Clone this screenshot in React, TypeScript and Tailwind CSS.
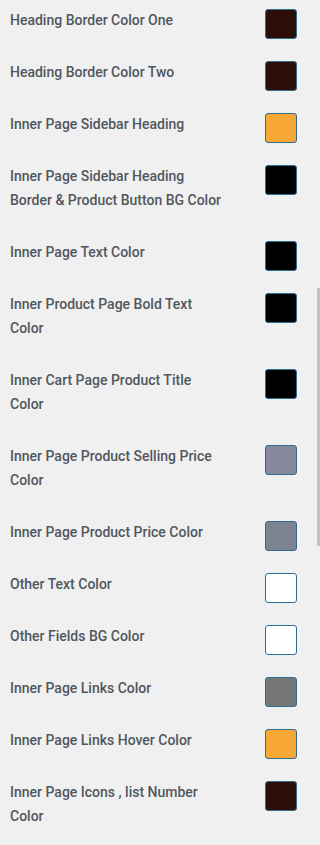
const rows = [
    { label: 'Heading Border Color One', color: 'bg-[#2e0f07]' },
    { label: 'Heading Border Color Two', color: 'bg-[#2e0f07]' },
    { label: 'Inner Page Sidebar Heading', color: 'bg-[#f7a836]' },
    { label: 'Inner Page Sidebar Heading Border & Product Button BG Color', color: 'bg-[#000000]' },
    { label: 'Inner Page Text Color', color: 'bg-[#000000]' },
    { label: 'Inner Product Page Bold Text Color', color: 'bg-[#000000]' },
    { label: 'Inner Cart Page Product Title Color', color: 'bg-[#000000]' },
    { label: 'Inner Page Product Selling Price Color', color: 'bg-[#878a9e]' },
    { label: 'Inner Page Product Price Color', color: 'bg-[#7d8391]' },
    { label: 'Other Text Color', color: 'bg-[#ffffff]' },
    { label: 'Other Fields BG Color', color: 'bg-[#ffffff]' },
    { label: 'Inner Page Links Color', color: 'bg-[#767676]' },
    { label: 'Inner Page Links Hover Color', color: 'bg-[#f7a836]' },
    { label: 'Inner Page Icons , list Number Color', color: 'bg-[#2e0f07]' },
];

export default function App() {
    return (
        <div className="relative min-h-screen bg-[#f0f0f0] overflow-hidden" style={{ fontFamily: 'Roboto, "Liberation Sans", sans-serif' }}>
            <div className="flex flex-col gap-[28px] pt-[8px] pl-[10px] pr-[23px]">
                {rows.map((row) => (
                    <div key={row.label} className="flex items-start justify-between">
                        <span className="w-[212px] text-[14px] leading-[24px] font-medium text-[#50575e]">{row.label}</span>
                        <span className={`mt-[1px] -mb-[7px] h-[30px] w-[32px] rounded-[3px] border border-[#2f6d93] ${row.color}`} />
                    </div>
                ))}
            </div>
            {/* scrollbar thumb */}
            <div className="absolute right-0 top-[288px] h-[258px] w-[3px] bg-[#c2c2c2]" />
        </div>
    );
}
